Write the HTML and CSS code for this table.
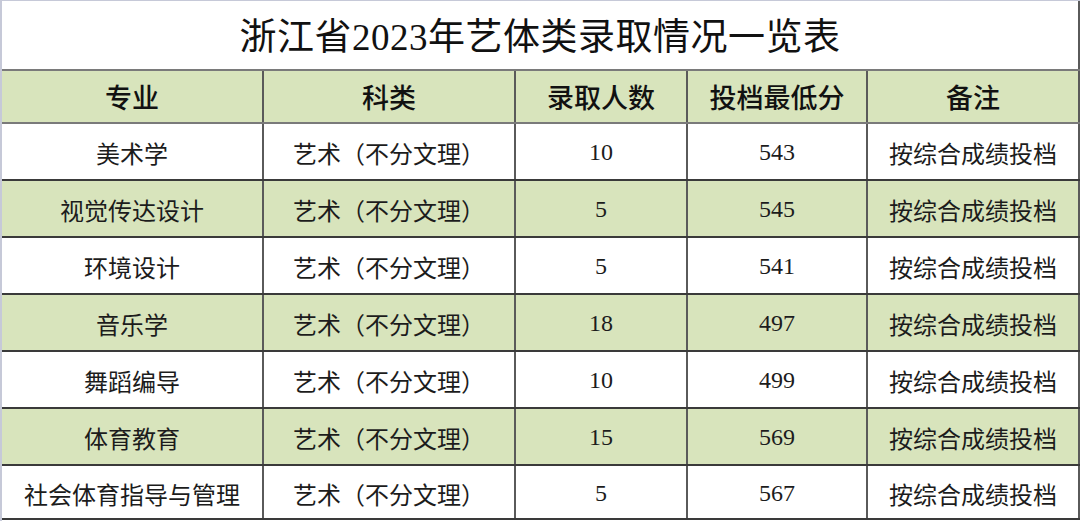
FILE: index.html
```html
<!DOCTYPE html>
<html lang="zh">
<head>
<meta charset="utf-8">
<title>浙江省2023年艺体类录取情况一览表</title>
<link rel="stylesheet" href="styles.css">
</head>
<body>
<div class="sheet">
  <table class="score-table">
    <colgroup>
      <col class="c1"><col class="c2"><col class="c3"><col class="c4"><col class="c5">
    </colgroup>
    <thead>
      <tr class="title-row"><th colspan="5" class="title">浙江省2023年艺体类录取情况一览表</th></tr>
      <tr class="head-row">
        <th>专业</th><th>科类</th><th>录取人数</th><th>投档最低分</th><th>备注</th>
      </tr>
    </thead>
    <tbody>
      <tr><td>美术学</td><td>艺术（不分文理）</td><td>10</td><td>543</td><td>按综合成绩投档</td></tr>
      <tr class="alt"><td>视觉传达设计</td><td>艺术（不分文理）</td><td>5</td><td>545</td><td>按综合成绩投档</td></tr>
      <tr><td>环境设计</td><td>艺术（不分文理）</td><td>5</td><td>541</td><td>按综合成绩投档</td></tr>
      <tr class="alt"><td>音乐学</td><td>艺术（不分文理）</td><td>18</td><td>497</td><td>按综合成绩投档</td></tr>
      <tr><td>舞蹈编导</td><td>艺术（不分文理）</td><td>10</td><td>499</td><td>按综合成绩投档</td></tr>
      <tr class="alt"><td>体育教育</td><td>艺术（不分文理）</td><td>15</td><td>569</td><td>按综合成绩投档</td></tr>
      <tr class="last"><td>社会体育指导与管理</td><td>艺术（不分文理）</td><td>5</td><td>567</td><td>按综合成绩投档</td></tr>
    </tbody>
  </table>
</div>
</body>
</html>
```
FILE: styles.css
```css
html, body {
  margin: 0;
  padding: 0;
  background: #ffffff;
}
.sheet {
  width: 1080px;
  height: 521px;
  overflow: hidden;
  box-sizing: border-box;
  border-top: 1px solid #c6c9d8;
  border-left: 2px solid #c6c9d8;
}
.score-table {
  width: 1077px;
  border-collapse: collapse;
  table-layout: fixed;
  font-family: "Liberation Serif", "Noto Sans CJK SC", serif;
  color: #1c1c1c;
}
.c1 { width: 261px; }
.c2 { width: 252px; }
.c3 { width: 172px; }
.c4 { width: 180px; }
.c5 { width: 212px; }
.score-table th,
.score-table td {
  padding: 0;
  text-align: center;
  vertical-align: middle;
  border: 2px solid #5a5a5a;
  white-space: nowrap;
}
.title-row .title {
  height: 66px;
  border-top: none;
  border-left: none;
  border-right: 2px solid #5a5a5a;
  border-bottom: 2px solid #7a7a7a;
  font-size: 37px;
  font-weight: 400;
  color: #111;
  background: #ffffff;
  letter-spacing: 0.5px;
  padding-bottom: 2px;
}
.head-row th {
  height: 51px;
  background: #d8e4bc;
  font-size: 27px;
  font-weight: 500;
  color: #111;
  border-bottom-color: #7a7a7a;
  border-top-color: #7a7a7a;
}
.head-row th:first-child,
.score-table td:first-child {
  border-left: none;
}
.score-table tbody td {
  height: 53px;
  font-size: 24px;
  font-weight: 400;
  padding-top: 2px;
  border-top-color: #3a3a3a;
  border-bottom-color: #3a3a3a;
}
.score-table tbody tr.last td {
  height: 50px;
}
.score-table tbody tr.alt td {
  background: #d8e4bc;
}
```
